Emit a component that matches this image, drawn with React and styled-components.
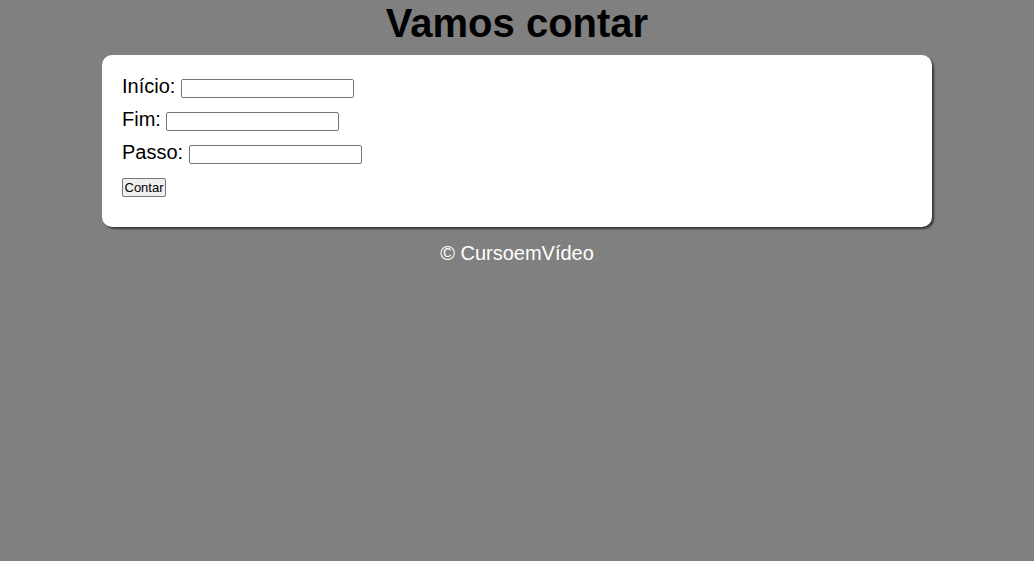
import React from "react";
import styled, { createGlobalStyle } from "styled-components";

const GlobalStyle = createGlobalStyle`
body {
  margin: 0;
  background-color: #808080;
  font-family: "Liberation Sans", Arial, sans-serif;
}
`;

const App = () => {
  return (
    <>
      <GlobalStyle />
      <Header>
        <Title>Vamos contar</Title>
      </Header>
      <Section>
        <Row>
          Início: <Field type="number" />
        </Row>
        <Row>
          Fim: <Field type="number" />
        </Row>
        <Row>
          Passo: <Field type="number" />
        </Row>
        <ButtonRow>
          <Button>Contar</Button>
        </ButtonRow>
      </Section>
      <Footer>© CursoemVídeo</Footer>
    </>
  );
};

export default App;

const Header = styled.header`
  padding-top: 3px;
`;

const Title = styled.h1`
  margin: 0;
  font-size: 40px;
  line-height: 40px;
  text-align: center;
  color: black;
`;

const Section = styled.section`
  width: 830px;
  box-sizing: border-box;
  margin: 12px auto 0;
  padding: 20px 20px 30px;
  background-color: white;
  border-radius: 10px;
  box-shadow: 2px 2px 2px rgba(0, 0, 0, 0.55);
  display: flex;
  flex-direction: column;
  gap: 10px;
`;

const Row = styled.div`
  font-size: 20px;
  line-height: 23px;
  color: black;
`;

const Field = styled.input`
  width: 173px;
  height: 19px;
  box-sizing: border-box;
  border: 1px solid #767676;
  border-radius: 2px;
  padding: 1px 2px;
  font-size: 13px;
  vertical-align: baseline;
  -moz-appearance: textfield;
  &::-webkit-inner-spin-button,
  &::-webkit-outer-spin-button {
    -webkit-appearance: none;
    margin: 0;
  }
`;

const ButtonRow = styled.div`
  margin-top: 4px;
  line-height: 0;
`;

const Button = styled.button`
  height: 19px;
  padding: 0 1.5px;
  border: 1px solid #767676;
  border-radius: 2px;
  background-color: #efefef;
  font-family: "Liberation Sans", Arial, sans-serif;
  font-size: 13px;
  color: black;
`;

const Footer = styled.footer`
  margin-top: 15px;
  text-align: center;
  color: white;
  font-size: 20px;
  line-height: 23px;
`;
